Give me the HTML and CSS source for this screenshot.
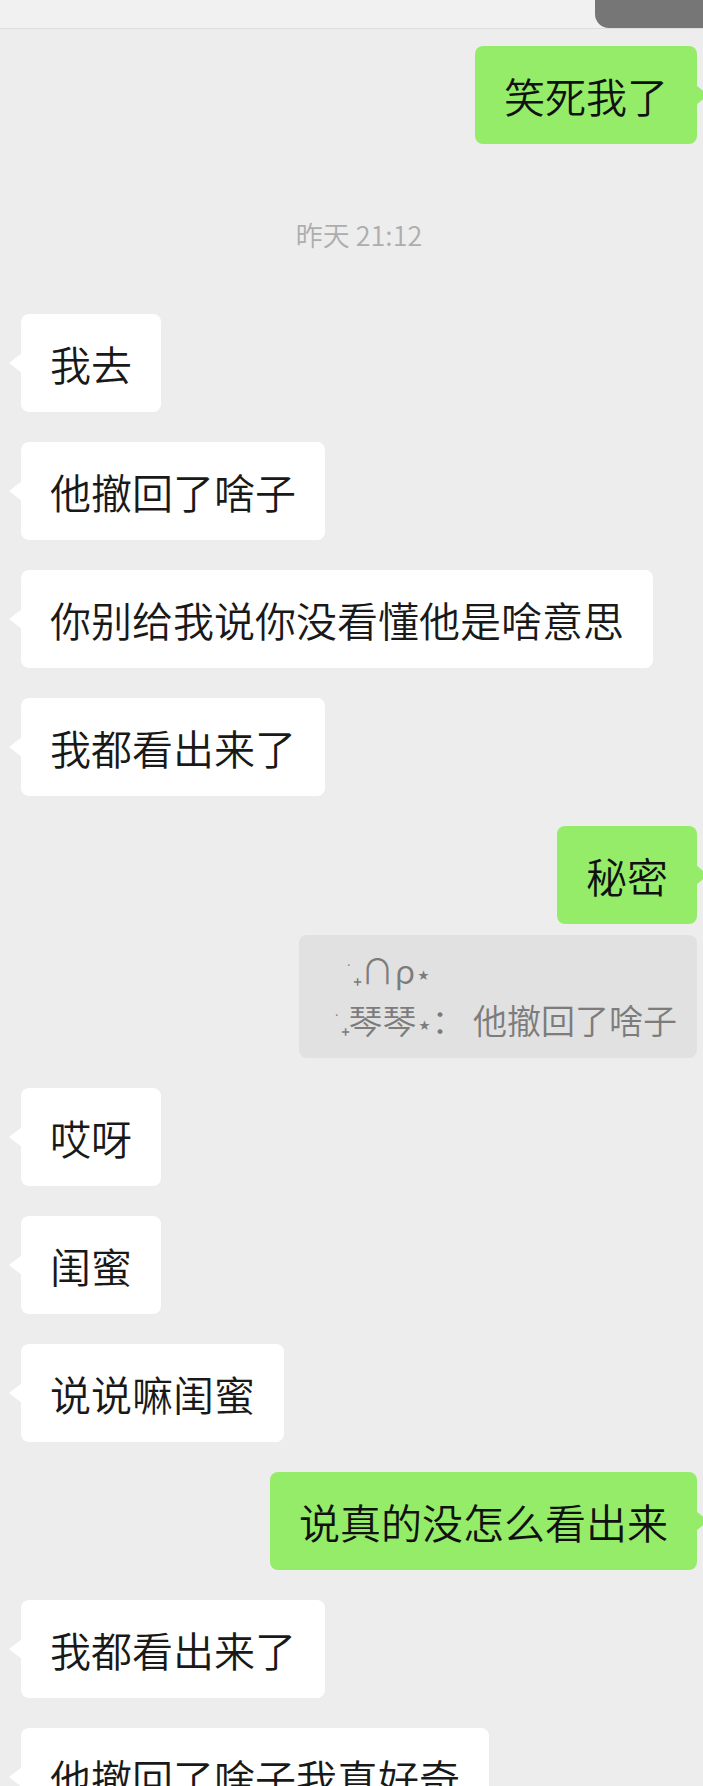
FILE: index.html
```html
<!DOCTYPE html>
<html>
<head>
<meta charset="utf-8">
<meta name="viewport" content="width=device-width, initial-scale=1.0">
<link rel="stylesheet" href="styles.css">
</head>
<body>

<!-- barra superior -->
<div class="topbar">
  <div class="topbar-tab"></div>
</div>

<!-- conversacion -->
<div class="chat">
  <div class="msg right"><div class="bubble">笑死我了</div></div>

  <div class="time">昨天 21:12</div>

  <div class="msg left first"><div class="bubble">我去</div></div>
  <div class="msg left"><div class="bubble">他撤回了啥子</div></div>
  <div class="msg left"><div class="bubble">你别给我说你没看懂他是啥意思</div></div>
  <div class="msg left"><div class="bubble">我都看出来了</div></div>
  <div class="msg right"><div class="bubble">秘密</div></div>
  <div class="quote"><span class="deco">˙₊</span>∩ρ<span class="deco">⋆</span><br><span class="deco">˙₊</span>琴琴<span class="deco">⋆</span>： 他撤回了啥子</div>
  <div class="msg left"><div class="bubble">哎呀</div></div>
  <div class="msg left"><div class="bubble">闺蜜</div></div>
  <div class="msg left"><div class="bubble">说说嘛闺蜜</div></div>
  <div class="msg right"><div class="bubble">说真的没怎么看出来</div></div>
  <div class="msg left"><div class="bubble">我都看出来了</div></div>
  <div class="msg left"><div class="bubble">他撤回了啥子我真好奇</div></div>
</div>

</body>
</html>
```

FILE: styles.css
```css
* {
  box-sizing: border-box;
}

html, body {
  margin: 0;
  padding: 0;
}

body {
  width: 703px;
  height: 1786px;
  overflow: hidden;
  background-color: #ededed;
  font-family: "Noto Sans CJK SC", "Noto Sans", "DejaVu Sans", sans-serif;
  font-weight: 350;
  color: #191919;
}

/* barra superior */
.topbar {
  height: 29px;
  display: flex;
  justify-content: flex-end;
  background-color: #f1f1f1;
  border-bottom: 1px solid #dddddd;
}

.topbar-tab {
  width: 108px;
  height: 28px;
  background-color: #767676;
  border-bottom-left-radius: 14px;
}

/* lista de mensajes */
.chat {
  display: flex;
  flex-direction: column;
  padding: 17px 6px 0 21px;
}

.msg {
  display: flex;
  margin-top: 30px;
}

.msg:first-child,
.msg.first {
  margin-top: 0;
}

.msg.left {
  justify-content: flex-start;
}

.msg.right {
  justify-content: flex-end;
}

.bubble {
  position: relative;
  padding: 25px 29px;
  font-size: 41px;
  line-height: 48px;
  border-radius: 8px;
  background-color: #ffffff;
  white-space: nowrap;
}

.bubble::before {
  content: "";
  position: absolute;
  top: 39px;
  width: 0;
  height: 0;
  border-top: 10px solid transparent;
  border-bottom: 10px solid transparent;
}

.left .bubble::before {
  left: -12px;
  border-right: 13px solid #ffffff;
}

.right .bubble {
  background-color: #95ec69;
  color: #111111;
}

.right .bubble::before {
  right: -11px;
  border-left: 12px solid #95ec69;
}

/* hora */
.time {
  margin: 73px 0 61px;
  text-align: center;
  font-size: 27px;
  line-height: 36px;
  color: #adadad;
}

/* cita */
.quote {
  align-self: flex-end;
  margin-top: 11px;
  padding: 10px 20px 13px 31px;
  font-size: 34px;
  line-height: 50px;
  text-indent: 12px;
  color: #7c7c7c;
  background-color: #e1e1e1;
  border-radius: 8px;
  white-space: nowrap;
}

.quote .deco {
  font-family: "DejaVu Sans", sans-serif;
  font-size: 27px;
  letter-spacing: -2px;
  line-height: 1;
}
```
